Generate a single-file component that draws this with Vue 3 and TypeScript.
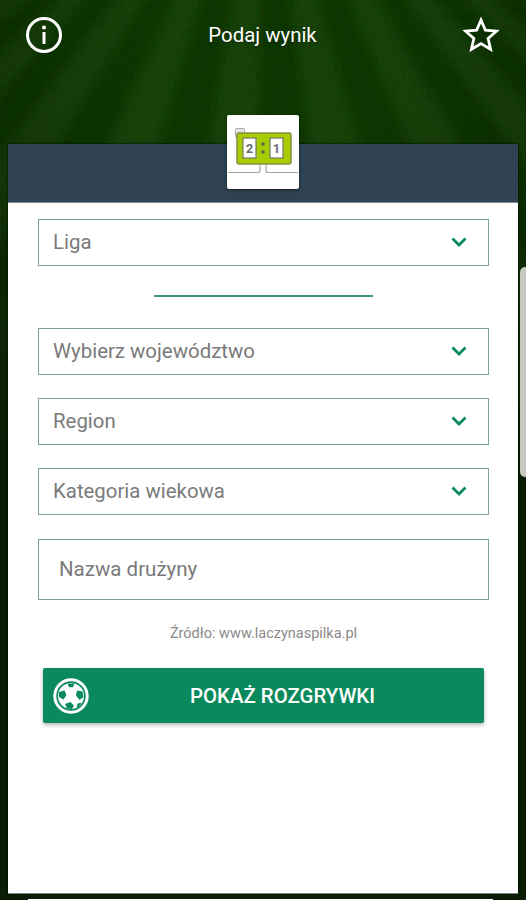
<script setup lang="ts">
const selects = ['Wybierz województwo', 'Region', 'Kategoria wiekowa']
const rays = Array.from({ length: 11 }, (_, i) => i - 5)
</script>

<template>
  <div class="screen">
    <svg class="turf" viewBox="0 0 526 900" preserveAspectRatio="none" aria-hidden="true">
      <defs>
        <filter id="soft"><feGaussianBlur stdDeviation="5" /></filter>
        <filter id="grass" x="0" y="0" width="100%" height="100%">
          <feTurbulence type="fractalNoise" baseFrequency="0.9" numOctaves="2" seed="4" />
          <feColorMatrix values="0 0 0 0 0  0 0 0 0 0  0 0 0 0 0  0 0 0 1.4 -0.45" />
        </filter>
        <radialGradient id="vignette" cx="50%" cy="8%" r="62%">
          <stop offset="0.35" stop-color="#000" stop-opacity="0" />
          <stop offset="1" stop-color="#000" stop-opacity="0.2" />
        </radialGradient>
        <linearGradient id="fade" x1="0" y1="0" x2="0" y2="1">
          <stop offset="0.16" stop-color="#091a04" stop-opacity="0" />
          <stop offset="0.5" stop-color="#091a04" stop-opacity="0.9" />
        </linearGradient>
      </defs>
      <rect width="526" height="900" fill="#1a470a" />
      <g filter="url(#soft)">
        <polygon
          v-for="i in rays"
          :key="i"
          :points="`263,-200 ${263 + i * 146 - 6},300 ${263 + i * 146 + 67},300`"
          fill="#113a05"
        />
      </g>
      <rect width="526" height="900" filter="url(#grass)" opacity="0.35" />
      <rect width="526" height="900" fill="url(#vignette)" />
      <rect width="526" height="900" fill="url(#fade)" />
    </svg>

    <header class="topbar">
      <svg class="icon" viewBox="0 0 38 38">
        <circle cx="19" cy="19" r="16.500" fill="none" stroke="#fff" stroke-width="3" />
        <circle cx="19" cy="11.500" r="2" fill="#fff" />
        <rect x="17.500" y="16" width="3" height="12" fill="#fff" />
      </svg>
      <span class="title">Podaj wynik</span>
      <svg class="icon star" viewBox="0 0 38 38">
        <path
          d="M19 4l4.400 10.200 11 1-8.300 7.300 2.500 10.800L19 27.600l-9.600 5.700 2.500-10.800-8.300-7.300 11-1z"
          fill="none"
          stroke="#fff"
          stroke-width="2.800"
        />
      </svg>
    </header>

    <main class="card">
      <div class="band">
        <div class="badge">
          <svg viewBox="0 0 72 74" width="72" height="74">
            <rect x="8.500" y="13.500" width="9" height="9" rx="1" fill="#e6e6e6" stroke="#a9a9a9" />
            <rect x="10" y="18" width="54" height="31" rx="2" fill="#a8cc00" stroke="#7d9440" stroke-width="1.500" />
            <rect x="16" y="23" width="13" height="20" fill="#fff" stroke="#70786c" stroke-width="1.200" />
            <rect x="43" y="23" width="13" height="20" fill="#fff" stroke="#70786c" stroke-width="1.200" />
            <text x="22.500" y="37.500" class="digit">2</text>
            <text x="49.500" y="37.500" class="digit">1</text>
            <rect x="34.500" y="27.500" width="3" height="3" fill="#55604a" />
            <rect x="34.500" y="35.500" width="3" height="3" fill="#55604a" />
            <path
              d="M1 57.500h30q2 0 2-2V50M71 57.500H41q-2 0-2-2V50"
              fill="none"
              stroke="#a5a5a5"
              stroke-width="1.200"
            />
          </svg>
        </div>
      </div>

      <form class="form" @submit.prevent>
        <div class="field">
          <span>Liga</span>
          <svg class="chevron" viewBox="0 0 16 10">
            <path d="M1.500 1.500 8 8l6.500-6.500" />
          </svg>
        </div>
        <div class="divider"></div>
        <div class="fields">
          <div v-for="label in selects" :key="label" class="field">
            <span>{{ label }}</span>
            <svg class="chevron" viewBox="0 0 16 10">
              <path d="M1.500 1.500 8 8l6.500-6.500" />
            </svg>
          </div>
          <div class="field team">
            <span>Nazwa drużyny</span>
          </div>
        </div>
        <p class="source">Źródło: www.laczynaspilka.pl</p>
        <button class="show" type="button">
          <svg class="ball" viewBox="0 0 36 36">
            <circle cx="18" cy="18" r="16.200" fill="none" stroke="#fff" stroke-width="3" />
            <circle cx="18" cy="18" r="13" fill="#fff" />
            <path
              d="M14.500 5.500h7l-1.500 3.800h-4zM6 14l5.500-1.500 2 4.500-3 4.500-4.500-2.500zM24 12.500l5.500 1 1 5.500-4 3-3.500-4.500zM12 26l5.500-2 3.500 3.700-2 3.300-5-.5z"
              fill="#0a8a5c"
            />
            <path d="M24.500 25.500l4-.8-2.500 3.800-2.500.7z" fill="#0a8a5c" />
          </svg>
          <span>POKAŻ ROZGRYWKI</span>
        </button>
      </form>
    </main>

    <div class="next-card"></div>
    <div class="side-card"></div>
  </div>
</template>

<style>
html,
body {
  margin: 0;
  background: #0c2006;
}
</style>

<style scoped>
.screen {
  position: relative;
  width: 526px;
  height: 900px;
  overflow: hidden;
  display: flex;
  flex-direction: column;
  font-family: Roboto, 'Liberation Sans', sans-serif;
  background: #0c2006;
}

.turf {
  position: absolute;
  inset: 0;
  width: 100%;
  height: 100%;
}

.topbar {
  position: relative;
  height: 144px;
  flex: none;
  padding: 16px 25px 0;
  box-sizing: border-box;
  display: flex;
  justify-content: space-between;
  align-items: flex-start;
}

.icon {
  width: 38px;
  height: 38px;
}

.star {
  margin-right: 1px;
}

.title {
  color: #fff;
  font-size: 20.400px;
  line-height: 38px;
  text-shadow: 0 1px 2px rgba(0, 0, 0, 0.4);
}

.card {
  position: relative;
  height: 749px;
  flex: none;
  margin: 0 8px;
  background: #fff;
  box-shadow: 0 0 2px #000, 0 1px 0 #bbb;
}

.band {
  position: relative;
  height: 58px;
  background: #2e4252;
  border-bottom: 1px solid #7c8a96;
}

.badge {
  position: absolute;
  top: -29px;
  left: 219px;
  width: 72px;
  height: 74px;
  background: #fff;
  border-radius: 2px;
  box-shadow: 0 1px 3px rgba(0, 0, 0, 0.5);
}

.digit {
  font-size: 13px;
  font-weight: 700;
  fill: #6a6e74;
  text-anchor: middle;
}

.form {
  padding: 16px 29px 0 30px;
  display: flex;
  flex-direction: column;
}

.field {
  height: 47px;
  box-sizing: border-box;
  padding: 0 21px 2px 14px;
  border: 1px solid #7aa593;
  display: flex;
  align-items: center;
  justify-content: space-between;
  color: #7a7a7a;
  font-size: 20.400px;
}

.field .chevron {
  margin-top: 1px;
}

.team {
  height: 61px;
  margin-top: 1px;
  padding-left: 20px;
  font-size: 20.500px;
}

.fields {
  display: flex;
  flex-direction: column;
  gap: 23px;
}

.chevron {
  width: 16px;
  height: 10px;
  fill: none;
  stroke: #0a8a5c;
  stroke-width: 2.800;
}

.divider {
  width: 219px;
  height: 2px;
  margin: 29px auto 31px;
  background: #3f9679;
}

.source {
  margin: 24px 0 0;
  color: #8a8a8a;
  font-size: 14.500px;
  line-height: 20px;
  text-align: center;
}

.show {
  position: relative;
  height: 55px;
  margin: 24px 5px 0;
  padding: 0 0 0 38px;
  border: 0;
  border-radius: 2px;
  background: #0a8a5c;
  box-shadow: 0 2px 4px rgba(0, 0, 0, 0.3);
  color: #fff;
  font-family: inherit;
  font-size: 20.400px;
  font-weight: 500;
}

.ball {
  position: absolute;
  left: 10px;
  top: 10px;
  width: 36px;
  height: 36px;
}

.next-card {
  position: absolute;
  left: 28px;
  right: 33px;
  top: 899px;
  height: 2px;
  background: #fff;
}

.side-card {
  position: absolute;
  right: 0;
  top: 267px;
  width: 6px;
  height: 210px;
  background: #c6c7bd;
  border-radius: 5px 0 0 5px;
}
</style>
